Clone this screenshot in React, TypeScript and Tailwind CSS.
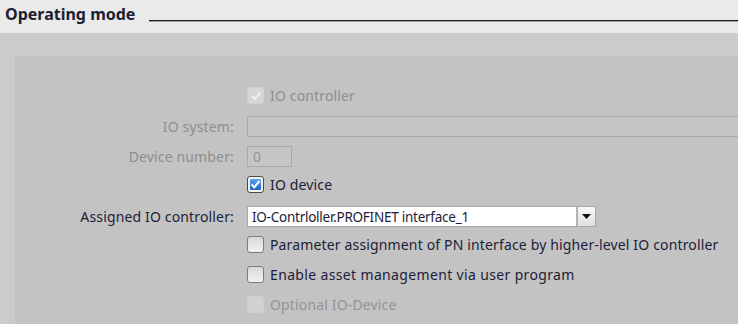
import React from "react";

type CbProps = { state: "checked" | "unchecked" | "disabledChecked" | "disabledUnchecked" };

function Checkbox({ state }: CbProps) {
  if (state === "checked") {
    return (
      <div className="w-[17px] h-[17px] rounded-[3px] border border-[#4a4a4a] bg-[#f2f2f2] p-[2px] shrink-0">
        <div className="w-full h-full rounded-[1px] bg-gradient-to-b from-[#5aa6ee] to-[#1c63c4] flex items-center justify-center">
          <svg width="11" height="11" viewBox="0 0 11 11">
            <path d="M1.5 5.5 L4.3 8.3 L9.5 2" stroke="#ffffff" strokeWidth="2" fill="none" />
          </svg>
        </div>
      </div>
    );
  }
  if (state === "disabledChecked") {
    return (
      <div className="w-[17px] h-[17px] rounded-[3px] border border-[#d2d2d2] bg-[#d6d6d6] flex items-center justify-center shrink-0">
        <svg width="12" height="12" viewBox="0 0 12 12">
          <path d="M2 6 L5 9 L10.5 2.5" stroke="#efefef" strokeWidth="2.2" fill="none" />
        </svg>
      </div>
    );
  }
  if (state === "disabledUnchecked") {
    return <div className="w-[17px] h-[17px] rounded-[3px] border border-[#cfcfcf] bg-[#d1d1d1] shrink-0" />;
  }
  return (
    <div className="w-[17px] h-[17px] rounded-[3px] border border-[#7c7c7c] bg-gradient-to-b from-[#d8d8d8] to-[#f2f2f2] shrink-0" />
  );
}

function Row({ label, disabled, children, className }: { label?: string; disabled?: boolean; children: React.ReactNode; className?: string }) {
  return (
    <div className={"flex items-center " + (className ?? "")}>
      <div className={"w-[219px] text-right whitespace-nowrap " + (disabled ? "text-[#8e8e8e]" : "text-[#1d1d38]")}>
        {label}
      </div>
      <div className="ml-[13px] flex items-center flex-1 min-w-0">{children}</div>
    </div>
  );
}

export default function App() {
  return (
    <div className="w-[738px] h-[324px] overflow-hidden bg-[#cbcbcb] text-[14px] leading-[18px] tracking-[0.15px]" style={{ fontFamily: '"Noto Sans", "Open Sans", sans-serif' }}>
      <div className="h-[33px] bg-[#eaeaea] flex items-start pt-[3px] pl-[5px]">
        <span className="font-bold text-[16px] leading-[22px] tracking-normal text-[#1c2030] whitespace-nowrap">Operating mode</span>
        <div className="flex-1 ml-[14px] mt-[17px]">
          <div className="h-[1px] bg-[#1e1e1e]" />
          <div className="h-[1px] bg-[#a0a0a0]" />
        </div>
      </div>
      <div className="h-[23px]" />
      <div className="ml-[15px] h-[268px] bg-[#c3c3c3] pt-[31px]">
        <Row disabled className="h-[17px]">
          <Checkbox state="disabledChecked" />
          <span className="ml-[6px] text-[#8e8e8e] whitespace-nowrap">IO controller</span>
        </Row>
        <Row label="IO system:" disabled className="h-[21px] mt-[12px]">
          <div className="h-[21px] w-[560px] shrink-0 border border-[#a9a9a9] bg-[#c5c5c5]" />
        </Row>
        <Row label="Device number:" disabled className="h-[21px] mt-[9px]">
          <div className="h-[21px] w-[45px] border border-[#a9a9a9] bg-[#c5c5c5] pl-[5px] text-[#939393] flex items-center">0</div>
        </Row>
        <Row className="h-[17px] mt-[9px]">
          <Checkbox state="checked" />
          <span className="ml-[6px] text-[#1d1d38] whitespace-nowrap">IO device</span>
        </Row>
        <Row label="Assigned IO controller:" className="h-[21px] mt-[13px]">
          <div className="h-[21px] w-[349px] border border-[#a6a6a6] bg-white flex">
            <div className="flex-1 pl-[4px] text-[13.5px] text-[#1d1d38] flex items-center whitespace-nowrap tracking-[-0.25px]">IO-Contrloller.PROFINET interface_1</div>
            <div className="w-[19px] h-full border-l-2 border-[#b4b4b4] bg-gradient-to-b from-[#fafafa] to-[#dedede] flex items-center justify-center">
              <svg width="9" height="5" viewBox="0 0 9 5">
                <path d="M0 0 L9 0 L4.5 5 Z" fill="#111" />
              </svg>
            </div>
          </div>
        </Row>
        <Row className="h-[17px] mt-[9px]">
          <Checkbox state="unchecked" />
          <span className="ml-[6px] text-[#1d1d38] whitespace-nowrap">Parameter assignment of PN interface by higher-level IO controller</span>
        </Row>
        <Row className="h-[17px] mt-[13px]">
          <Checkbox state="unchecked" />
          <span className="ml-[6px] text-[#1d1d38] whitespace-nowrap tracking-[0.35px]">Enable asset management via user program</span>
        </Row>
        <Row className="h-[17px] mt-[13px]">
          <Checkbox state="disabledUnchecked" />
          <span className="ml-[6px] text-[#949494] whitespace-nowrap">Optional IO-Device</span>
        </Row>
      </div>
    </div>
  );
}
